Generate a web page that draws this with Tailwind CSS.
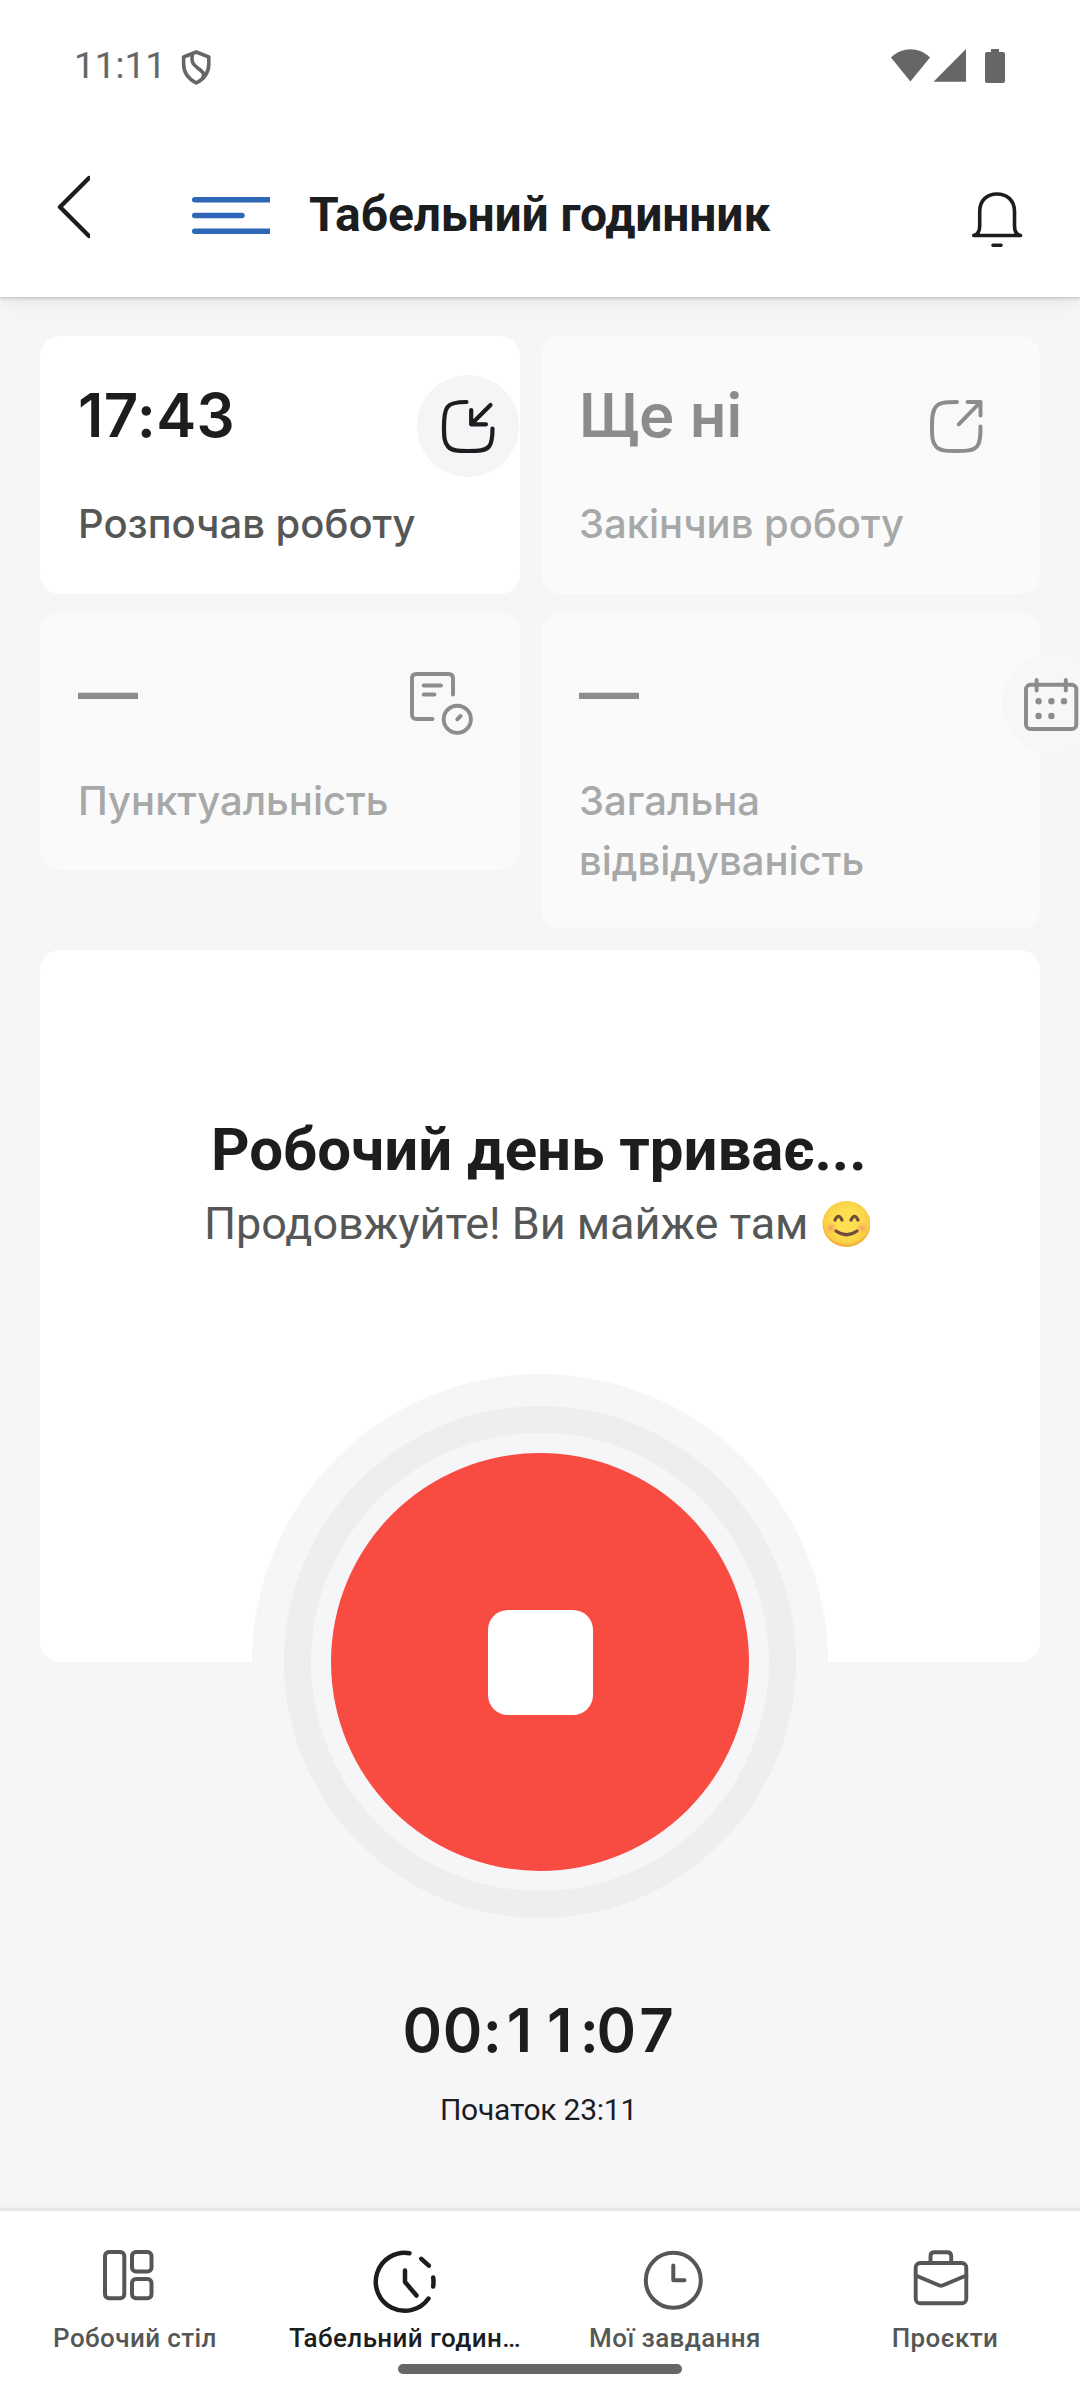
<!DOCTYPE html>
<html lang="uk">
<head>
<meta charset="utf-8">
<title>Табельний годинник</title>
<script src="https://cdn.jsdelivr.net/npm/@tailwindcss/browser@4"></script>
</head>
<body class="w-[1080px] h-[2400px] overflow-hidden bg-[#f6f6f9] text-[#1b1d1e] font-[Roboto,sans-serif]">
<div class="relative flex h-[2400px] w-[1080px] flex-col overflow-hidden">

  <header class="relative flex h-[297px] flex-none flex-col bg-white shadow-[0_1px_4px_rgba(0,0,0,0.22),0_6px_20px_rgba(0,0,0,0.06)]">
    <div class="flex h-[88px] items-start pt-[44px] pl-[74px] text-[#666]">
      <span class="w-[105px] text-[37px] leading-[44px]">11:11</span>
      <svg class="h-[44px] w-[36px]" viewBox="179 44 36 44" fill="none" stroke="#666" stroke-width="3.6" stroke-linejoin="round"><path d="M196.300 52 L208.800 57 V64 C208.800 72.500 204 79 196.300 83 C188.500 79 183.600 72.500 183.600 64 V57 Z"/><path d="M192.300 54 C191 64 194 65 199 69 C204 73 204.500 74 202.500 79"/></svg>
      <svg class="ml-[671px] h-[44px] w-[124px]" viewBox="886 44 124 44" fill="#666"><path d="M910.400 81.500 L891 57.500 C902 46.500 919 46.500 930 57.500 Z"/><path d="M933.500 81.700 H966 V49 Z"/><path d="M991 49 H999 V52 H1003 Q1005 52 1005 54 V81 Q1005 83 1003 83 H987 Q985 83 985 81 V54 Q985 52 987 52 H991 Z"/></svg>
    </div>
    <div class="flex items-start pl-[56px]">
      <svg class="mt-[84px] h-[70px] w-[34px]" viewBox="56 172 34 70" fill="none" stroke="#1b1d1e" stroke-width="4.4" stroke-linecap="round" stroke-linejoin="round"><path d="M89 178 L60 207 L89 236"/></svg>
      <svg class="mt-[104px] ml-[102px] h-[48px] w-[78px]" viewBox="192 192 78 48" fill="none" stroke="#2e67b8" stroke-width="5.4" stroke-linecap="round"><path d="M194.700 199.700 H275 M194.700 215.500 H242 M194.700 231.300 H275"/></svg>
      <h1 class="mt-[97px] ml-[39px] w-[480px] text-[48px] leading-[60px] font-bold tracking-[-0.12px] whitespace-nowrap">Табельний годинник</h1>
      <svg class="mt-[98px] ml-[179px] h-[66px] w-[60px]" viewBox="968 186 60 66" fill="none" stroke="#1b1d1e" stroke-width="3.6" stroke-linecap="round" stroke-linejoin="round"><path d="M979.700 226 V211.500 C979.700 200 987.500 194 997 194 C1006.500 194 1014.500 200 1014.500 211.500 V226 C1014.500 231.500 1016 234.500 1020.500 235.500 H973.700 C978.200 234.500 979.700 231.500 979.700 226 Z M993 245.200 H1001"/></svg>
    </div>
  </header>

  <main class="flex flex-col px-[40px] pt-[39px]">
    <div class="grid grid-cols-[480px_499px] items-start gap-x-[21px] gap-y-[19px] font-[Inter,sans-serif]">
      <section class="h-[258px] rounded-[20px] bg-white pt-[39px] pl-[38px]">
        <div class="flex">
          <div class="w-[339px] flex-none pt-[4px] text-[60px] leading-[72px] font-semibold tracking-[0.4px]">17:43</div>
          <div class="h-[102px] w-[102px] flex-none rounded-full bg-[#f5f5f8]">
            <svg class="h-[102px] w-[102px]" viewBox="417 375 102 102" fill="none" stroke="#1b1d1e" stroke-width="4.2" stroke-linecap="round" stroke-linejoin="round"><path d="M466.500 402 C455 402 450 403.500 447.500 407 C444.500 411 444 417 444 427 C444 438 444.500 442.500 448 446.500 C452 451 458 451 468.500 451 C478 451 485 451 489 446.500 C492 443 492.500 438 492.500 428.500"/><path d="M490.500 405 L471.200 424.300 M471.200 410 V424.300 H486"/></svg>
          </div>
        </div>
        <div class="mt-[17px] text-[40px] leading-[60px] font-medium text-[#555756]">Розпочав роботу</div>
      </section>
      <section class="h-[258px] rounded-[20px] bg-[#fafafb] pt-[39px] pl-[38px]">
        <div class="flex">
          <div class="w-[329px] flex-none pt-[4px] text-[60px] leading-[72px] font-semibold text-[#8b8c8d]">Ще ні</div>
          <div class="h-[102px] w-[102px] flex-none rounded-full bg-[#f9f9fb]">
            <svg class="h-[102px] w-[102px]" viewBox="908 375 102 102" fill="none" stroke="#8b8c8d" stroke-width="3.9" stroke-linecap="round" stroke-linejoin="round"><path d="M957 402 C944 402 939 403 936 406.500 C932.500 410.500 932 416 932 427 C932 438 932.500 442.500 936 446.500 C940 451 946 451 956.500 451 C966 451 973 451 977 446.500 C980 443 980.500 438 980.500 426.500"/><path d="M958.700 424.300 L980.500 402 M967.500 402 H980.500 V415.500"/></svg>
          </div>
        </div>
        <div class="mt-[17px] text-[40px] leading-[60px] font-medium text-[#a7a8a8]">Закінчив роботу</div>
      </section>
      <section class="h-[257px] rounded-[20px] bg-[#fafafb] pt-[39px] pl-[38px]">
        <div class="flex">
          <div class="w-[313px] flex-none pt-[4px] text-[60px] leading-[72px] font-semibold text-[#8b8c8d]">—</div>
          <div class="h-[102px] w-[102px] flex-none rounded-full bg-[#f9f9fb]">
            <svg class="h-[102px] w-[102px]" viewBox="391 652 102 102" fill="none" stroke="#8b8c8d" stroke-width="3.9" stroke-linecap="round" stroke-linejoin="round"><path d="M432.500 719 H416.500 Q412 719 412 714.500 V678.500 Q412 674 416.500 674 H448.500 Q453 674 453 678.500 V694.500 M423.700 685.500 H441 M423.700 694.500 H434.500"/><circle cx="457.300" cy="719.300" r="13.600"/><path d="M457.300 719.300 L460.600 716"/></svg>
          </div>
        </div>
        <div class="mt-[17px] text-[40px] leading-[60px] font-medium text-[#a7a8a8]">Пунктуальність</div>
      </section>
      <section class="h-[316px] rounded-[20px] bg-[#fafafb] pt-[39px] pl-[38px]">
        <div class="flex">
          <div class="w-[423px] flex-none pt-[4px] text-[60px] leading-[72px] font-semibold text-[#8b8c8d]">—</div>
          <div class="h-[102px] w-[102px] flex-none rounded-full bg-[#f7f7fa]">
            <svg class="h-[102px] w-[102px]" viewBox="1002 652 102 102" fill="none" stroke="#8b8c8d" stroke-width="3.9" stroke-linecap="round"><rect x="1026" y="684.700" width="50.300" height="44.300" rx="4.500"/><path d="M1036.600 680 V690.500 M1065.800 680 V690.500"/><g fill="#8b8c8d" stroke="none"><circle cx="1038.600" cy="701.300" r="3.200"/><circle cx="1051.400" cy="701.300" r="3.200"/><circle cx="1064" cy="701.300" r="3.200"/><circle cx="1038.600" cy="716" r="3.200"/><circle cx="1051.400" cy="716" r="3.200"/></g></svg>
          </div>
        </div>
        <div class="mt-[17px] w-[320px] text-[40px] leading-[60px] font-medium text-[#a7a8a8]">Загальна відвідуваність</div>
      </section>
    </div>

    <section class="mt-[21px] flex h-[712px] flex-col items-start rounded-[20px] bg-white pt-[164px]">
      <h2 class="ml-[171px] text-[60px] leading-[72px] font-bold tracking-[-0.05px] whitespace-nowrap">Робочий день триває...</h2>
      <div class="mt-[9px] ml-[164px] flex items-start text-[#555756]">
        <p class="w-[612px] pt-[2px] text-[45px] leading-[54px] tracking-[-0.04px] whitespace-nowrap">Продовжуйте! Ви майже там</p>
        <svg class="mt-[5px] h-[50px] w-[54px]" viewBox="0 0 54 50" role="img" aria-label="😊">
          <defs>
            <radialGradient id="face" cx="0.5" cy="0.45" r="0.52"><stop offset="0.5" stop-color="#fddf50"/><stop offset="0.9" stop-color="#f9cf45"/><stop offset="1" stop-color="#f2b03a"/></radialGradient>
            <radialGradient id="blush"><stop offset="0" stop-color="#f58a6a" stop-opacity=".75"/><stop offset="1" stop-color="#f9a45f" stop-opacity="0"/></radialGradient>
          </defs>
          <ellipse cx="30.500" cy="24" rx="24" ry="23" fill="url(#face)"/>
          <circle cx="15" cy="28" r="6.500" fill="url(#blush)"/><circle cx="46" cy="28" r="6.500" fill="url(#blush)"/>
          <path d="M19 20 Q22.500 12.500 26 20 M35 20 Q38.500 12.500 42 20 M20 31 Q30.500 38.500 41 31" fill="none" stroke="#6d4c3a" stroke-width="3.200" stroke-linecap="round"/>
        </svg>
      </div>
    </section>

    <div class="-mt-[288px] flex h-[576px] w-[576px] items-center justify-center self-center rounded-full bg-[#f6f6f9]">
      <div class="flex h-[512px] w-[512px] items-center justify-center rounded-full border-[27px] border-[#eee]">
        <button class="flex h-[418px] w-[418px] flex-none items-center justify-center rounded-full bg-[#f84b41]" aria-label="Стоп">
          <span class="h-[105px] w-[105px] rounded-[20px] bg-white"></span>
        </button>
      </div>
    </div>

    <div class="mt-[44px] flex justify-center pr-px text-center font-[Inter,sans-serif] text-[60px] leading-[72px] font-semibold"><span class="w-[40.3px]">0</span><span class="w-[40.3px]">0</span><span class="w-[16.4px]">:</span><span class="w-[40.3px]">1</span><span class="w-[40.3px]">1</span><span class="w-[16.4px]">:</span><span class="w-[40.3px]">0</span><span class="w-[40.3px]">7</span></div>
    <div class="mt-[24px] pr-[3px] text-center text-[30px] leading-[40px] tracking-[-0.24px]">Початок 23:11</div>
  </main>

  <nav class="mt-auto grid h-[192px] flex-none grid-cols-4 border-t-[3px] border-[#e5e5e5] bg-white pt-[35px] text-[26px] font-medium tracking-[0.4px] text-[#555756] shadow-[0_-1px_6px_rgba(0,0,0,0.04)]">
    <div class="flex flex-col items-center">
      <svg class="h-[72px] w-[72px]" viewBox="99 2246 72 72" fill="none" stroke="#555756" stroke-width="4"><rect x="105" y="2252" width="19.300" height="46.300" rx="4"/><rect x="132" y="2252" width="19.500" height="19.500" rx="4"/><rect x="132" y="2279" width="19.500" height="19.300" rx="4"/></svg>
      <span class="mt-[4px] leading-[32px]">Робочий стіл</span>
    </div>
    <div class="flex flex-col items-center text-[#1b1d1e]">
      <svg class="h-[72px] w-[72px]" viewBox="369 2246 72 72" fill="none" stroke="#1b1d1e" stroke-width="4.500" stroke-linecap="round" stroke-linejoin="round"><path d="M409.500 2253.200 A29 29 0 1 0 428.500 2298.500 M421.300 2258.800 L428.800 2265.700 M433.200 2277.500 Q433.800 2282 433.200 2286.500 M405 2270.500 V2282 L416.500 2295.500"/></svg>
      <span class="mt-[4px] leading-[32px] whitespace-nowrap">Табельний годин…</span>
    </div>
    <div class="flex flex-col items-center">
      <svg class="h-[72px] w-[72px]" viewBox="639 2246 72 72" fill="none" stroke="#555756" stroke-width="4" stroke-linecap="round" stroke-linejoin="round"><circle cx="673.300" cy="2280.300" r="27.500"/><path d="M673.300 2265.500 V2280.300 H684.500"/></svg>
      <span class="mt-[4px] leading-[32px]">Мої завдання</span>
    </div>
    <div class="flex flex-col items-center">
      <svg class="h-[72px] w-[72px]" viewBox="909 2246 72 72" fill="none" stroke="#555756" stroke-width="3.900" stroke-linecap="round" stroke-linejoin="round"><rect x="915.700" y="2263" width="50.600" height="40.300" rx="4.500"/><path d="M930.500 2263 V2256 Q930.500 2252.300 934.500 2252.300 H947.200 Q951.200 2252.300 951.200 2256 V2263 M915.700 2275.500 L939.500 2285.500 Q941 2286 942.500 2285.500 L966.300 2275.500"/></svg>
      <span class="mt-[4px] leading-[32px]">Проєкти</span>
    </div>
  </nav>
  <div class="absolute bottom-[26px] left-[398px] h-[10px] w-[284px] rounded-full bg-[#666]"></div>
</div>
</body>
</html>
